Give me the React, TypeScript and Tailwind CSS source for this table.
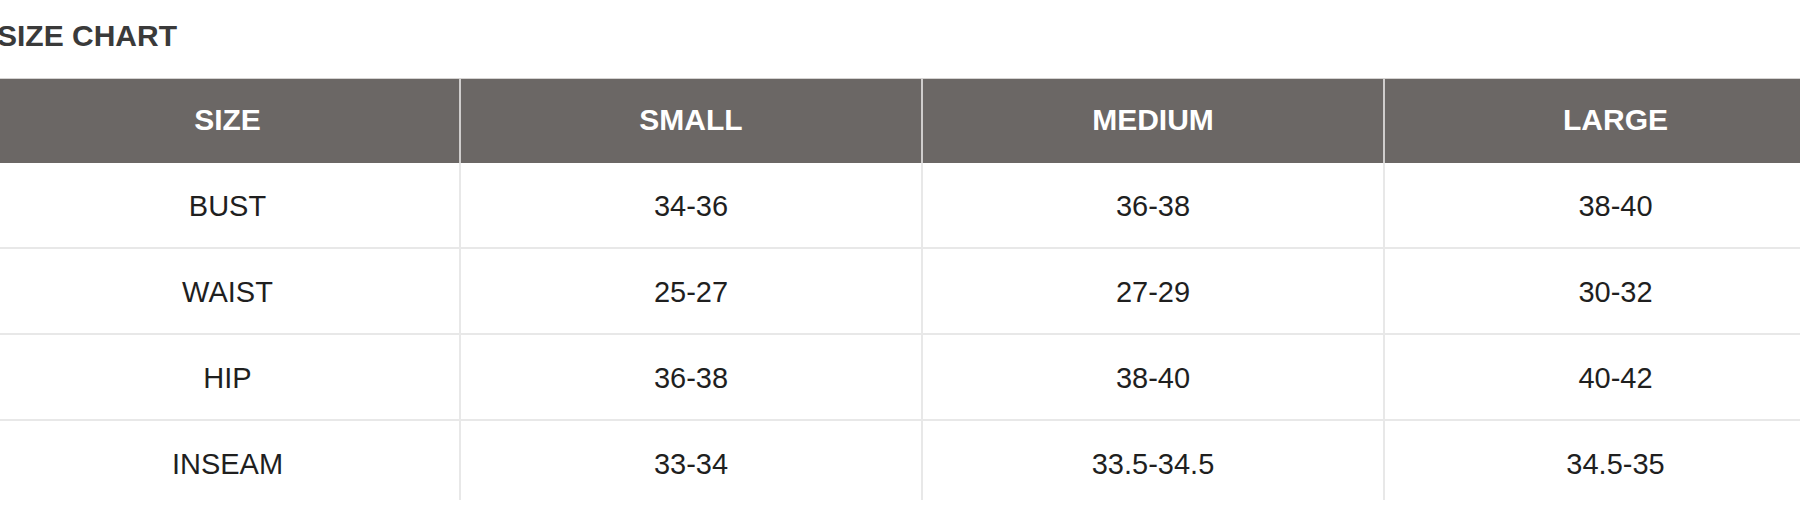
import React from 'react';

const columns = ['SIZE', 'SMALL', 'MEDIUM', 'LARGE'];

const rows = [
  ['BUST', '34-36', '36-38', '38-40'],
  ['WAIST', '25-27', '27-29', '30-32'],
  ['HIP', '36-38', '38-40', '40-42'],
  ['INSEAM', '33-34', '33.5-34.5', '34.5-35'],
];

const gridCols = 'grid grid-cols-[463px_462px_462px_463px]';

export default function App() {
  return (
    <div className="w-[1800px] h-[524px] overflow-hidden bg-white font-['Liberation_Sans',Arial,sans-serif]">
      <div className="-ml-[4px] w-[1850px]">
        <h2 className="pt-[21px] pl-[1px] text-[30px] leading-[30px] font-bold text-[#3a3a3a]">SIZE CHART</h2>

        <div className="mt-[27px]">
          <div className={`${gridCols} h-[85px] bg-[#6b6765] border-t border-[#d4d2d1]`}>
            {columns.map((c, i) => (
              <div
                key={c}
                className={`flex items-center justify-center pb-[4px] text-[30px] font-bold text-white ${
                  i > 0 ? 'border-l-2 border-[#cfcdcc]' : ''
                }`}
              >
                {c}
              </div>
            ))}
          </div>

          {rows.map((row, r) => {
            const last = r === rows.length - 1;
            return (
              <div
                key={row[0]}
                className={`${gridCols} ${last ? 'h-[79px]' : 'h-[86px] border-b-2 border-[#e8e8e8]'}`}
              >
                {row.map((cell, i) => (
                  <div
                    key={i}
                    className={`flex items-center justify-center text-[29px] text-[#1f1f1f] ${
                      last ? 'pt-[8px]' : 'pt-[4px]'
                    } ${i > 0 ? 'border-l-2 border-[#e8e8e8]' : ''}`}
                  >
                    {cell}
                  </div>
                ))}
              </div>
            );
          })}
        </div>
      </div>
    </div>
  );
}
